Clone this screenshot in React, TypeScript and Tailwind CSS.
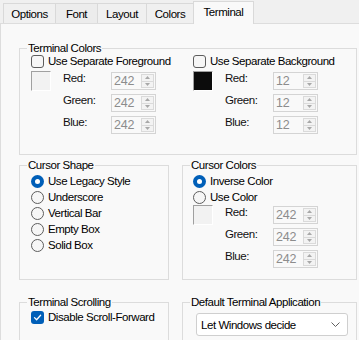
import React from "react";

const Check = ({ checked }: { checked?: boolean }) =>
  checked ? (
    <div className="flex h-[13px] w-[13px] shrink-0 items-center justify-center rounded-[3px] bg-[#005fb8]">
      <svg width="9" height="9" viewBox="0 0 9 9" fill="none">
        <path d="M1.5 4.6 L3.6 6.7 L7.6 2.2" stroke="white" strokeWidth="1.3" strokeLinecap="round" strokeLinejoin="round" />
      </svg>
    </div>
  ) : (
    <div className="h-[13px] w-[13px] shrink-0 rounded-[3px] border border-[#5d5d5d] bg-[#f6f6f6]" />
  );

const Radio = ({ on }: { on?: boolean }) =>
  on ? (
    <div className="flex h-[13px] w-[13px] shrink-0 items-center justify-center rounded-full bg-[#005fb8]">
      <div className="h-[5px] w-[5px] rounded-full bg-white" />
    </div>
  ) : (
    <div className="h-[13px] w-[13px] shrink-0 rounded-full border border-[#5d5d5d] bg-[#f6f6f6]" />
  );

const Spin = ({ v }: { v: string }) => (
  <div className="flex h-[18px] w-[45px] border border-[#d4d4d4] bg-[#f9f9f9]">
    <div className="flex-1 pl-[2px] text-[12.5px] leading-[16px] tracking-[-0.2px] text-[#8c8c8c]">{v}</div>
    <div className="my-[1px] mr-[1px] flex w-[13px] flex-col border border-[#dadada] bg-[#f3f3f3]">
      <div className="flex flex-1 items-center justify-center border-b border-[#dadada]">
        <svg width="5" height="3" viewBox="0 0 5 3">
          <path d="M0 3 L2.5 0 L5 3 Z" fill="#a8a8a8" />
        </svg>
      </div>
      <div className="flex flex-1 items-center justify-center">
        <svg width="5" height="3" viewBox="0 0 5 3">
          <path d="M0 0 L2.5 3 L5 0 Z" fill="#a8a8a8" />
        </svg>
      </div>
    </div>
  </div>
);

const Swatch = ({ dark }: { dark?: boolean }) => (
  <div
    className={
      "h-[20px] w-[20px] shrink-0 border border-t-[#a0a0a0] border-l-[#a0a0a0] border-r-[#ffffff] border-b-[#ffffff] " +
      (dark ? "bg-[#0c0c0c]" : "bg-[#f2f2f2]")
    }
  />
);

const RGB = ({ v }: { v: string }) => (
  <div className="flex">
    <Swatch dark={v === "12"} />
    <div className="ml-[12px] flex flex-col gap-[4px] pt-[1px]">
      {["Red:", "Green:", "Blue:"].map((l) => (
        <div key={l} className="flex items-start">
          <div className="w-[48px] leading-[12px] text-[#111]">{l}</div>
          <Spin v={v} />
        </div>
      ))}
    </div>
  </div>
);

const Legend = ({ children }: { children: React.ReactNode }) => (
  <legend className="ml-[7px] px-[1px] leading-[14px] text-black">{children}</legend>
);

export default function App() {
  return (
    <div className="flex h-[340px] w-[359px] flex-col overflow-hidden bg-[#f0f0f0] font-['Liberation_Sans',Arial,sans-serif] text-[11.5px] tracking-[-0.45px] text-black">
      <div className="flex h-[23px] shrink-0 items-end pl-[3px]">
        <div className="flex h-[20px] w-[52px] items-center justify-center border-l border-t border-[#d9d9d9] pt-[2px]">Options</div>
        <div className="flex h-[20px] w-[42px] items-center justify-center border-l border-t border-[#d9d9d9] bg-[#ececec] pt-[2px]">Font</div>
        <div className="flex h-[20px] w-[49px] items-center justify-center border-l border-t border-[#d9d9d9] pt-[2px]">Layout</div>
        <div className="flex h-[20px] w-[47px] items-center justify-center border-l border-t border-[#d9d9d9] pt-[2px]">Colors</div>
        <div className="relative z-10 mb-[-1px] flex h-[23px] w-[61px] items-center justify-center border-l border-r border-t border-[#d9d9d9] bg-[#f9f9f9]">Terminal</div>
      </div>
      <div className="flex-1 border-l border-t border-[#dddddd] bg-[#f9f9f9] pl-[18px] pt-[17px]">
        <fieldset className="h-[114px] w-[338px] border border-[#dcdcdc]">
          <Legend>Terminal Colors</Legend>
          <div className="flex pl-[11px]">
            <div className="w-[162px]">
              <div className="flex h-[16px] items-start gap-[4px]">
                <Check />
                <span className="leading-[13px]">Use Separate Foreground</span>
              </div>
              <RGB v="242" />
            </div>
            <div className="w-[162px]">
              <div className="flex h-[16px] items-start gap-[4px]">
                <Check />
                <span className="leading-[13px]">Use Separate Background</span>
              </div>
              <RGB v="12" />
            </div>
          </div>
        </fieldset>
        <div className="mt-[3px] flex gap-[13px]">
          <fieldset className="h-[122px] w-[150px] border border-[#dcdcdc]">
            <Legend>Cursor Shape</Legend>
            <div className="pl-[11px] pt-[1px]">
              {["Use Legacy Style", "Underscore", "Vertical Bar", "Empty Box", "Solid Box"].map((t, i) => (
                <div key={t} className="flex h-[16px] items-center gap-[4px]">
                  <Radio on={i === 0} />
                  <span className="leading-[14px]">{t}</span>
                </div>
              ))}
            </div>
          </fieldset>
          <fieldset className="h-[122px] w-[175px] border border-[#dcdcdc]">
            <Legend>Cursor Colors</Legend>
            <div className="pl-[10px] pt-[1px]">
              <div className="flex h-[16px] items-center gap-[4px]">
                <Radio on />
                <span className="leading-[14px]">Inverse Color</span>
              </div>
              <div className="flex h-[16px] items-center gap-[4px]">
                <Radio />
                <span className="leading-[14px]">Use Color</span>
              </div>
              <RGB v="242" />
            </div>
          </fieldset>
        </div>
        <div className="mt-[15px] flex gap-[13px]">
          <fieldset className="h-[60px] w-[150px] border border-[#dcdcdc]">
            <Legend>Terminal Scrolling</Legend>
            <div className="flex h-[16px] items-center gap-[4px] pl-[11px]">
              <Check checked />
              <span className="leading-[14px]">Disable Scroll-Forward</span>
            </div>
          </fieldset>
          <fieldset className="h-[60px] w-[175px] border border-[#dcdcdc]">
            <Legend>Default Terminal Application</Legend>
            <div className="ml-[13px] mt-[4px] flex h-[23px] w-[152px] items-center justify-between rounded-[3px] border border-[#cfcfcf] bg-white pl-[4px] pr-[7px]">
              <span className="leading-[14px]">Let Windows decide</span>
              <svg width="9" height="5" viewBox="0 0 9 5" fill="none">
                <path d="M0.5 0.5 L4.5 4.5 L8.5 0.5" stroke="#606060" strokeWidth="1" />
              </svg>
            </div>
          </fieldset>
        </div>
      </div>
    </div>
  );
}
